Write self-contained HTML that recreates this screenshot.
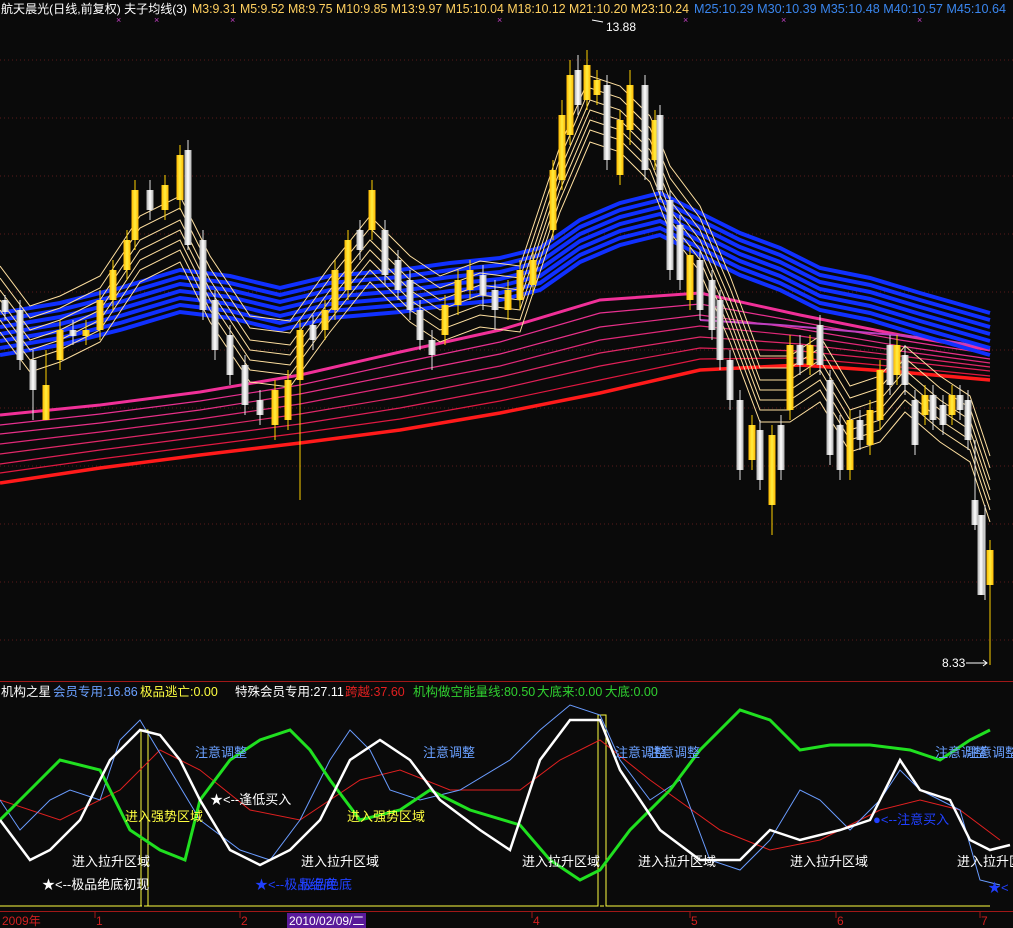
<!DOCTYPE html>
<html><head><meta charset="utf-8"><style>
html,body{margin:0;padding:0;background:#0a0a0a;width:1013px;height:928px;overflow:hidden}
svg{display:block}
text{font-family:"Liberation Sans","Noto Sans CJK SC",sans-serif}
</style></head><body>
<svg width="1013" height="928" viewBox="0 0 1013 928" xmlns="http://www.w3.org/2000/svg">
<rect width="1013" height="928" fill="#0a0a0a"/>
<!-- grid -->
<g stroke="#5a1a1a" stroke-dasharray="1,3" stroke-width="1">
<line x1="0" y1="60" x2="1013" y2="60"/><line x1="0" y1="118" x2="1013" y2="118"/><line x1="0" y1="176" x2="1013" y2="176"/><line x1="0" y1="234" x2="1013" y2="234"/><line x1="0" y1="292" x2="1013" y2="292"/><line x1="0" y1="350" x2="1013" y2="350"/><line x1="0" y1="408" x2="1013" y2="408"/><line x1="0" y1="466" x2="1013" y2="466"/><line x1="0" y1="524" x2="1013" y2="524"/><line x1="0" y1="582" x2="1013" y2="582"/><line x1="0" y1="640" x2="1013" y2="640"/>
</g>
<!-- header -->
<text x="1" y="13" font-size="12" fill="#fff" textLength="186" lengthAdjust="spacingAndGlyphs">航天晨光(日线,前复权) 夫子均线(3)</text>
<text x="192" y="13" font-size="12.5" fill="#ffd060" textLength="497" lengthAdjust="spacingAndGlyphs">M3:9.31  M5:9.52  M8:9.75  M10:9.85  M13:9.97  M15:10.04  M18:10.12  M21:10.20  M23:10.24</text>
<text x="694" y="13" font-size="12.5" fill="#3a86ee" textLength="312" lengthAdjust="spacingAndGlyphs">M25:10.29  M30:10.39  M35:10.48  M40:10.57  M45:10.64</text>
<g fill="#c040c0" font-size="9"><text x="116" y="23">×</text><text x="154" y="23">×</text><text x="230" y="23">×</text><text x="497" y="23">×</text><text x="683" y="23">×</text><text x="781" y="23">×</text><text x="917" y="23">×</text></g>

<!-- pink/red bundle -->
<g fill="none" stroke-width="1.2">
<path d="M0,415 L100,405 200,392 300,375 400,352 500,330 600,300 700,293 800,315 900,335 990,350" stroke="#f03098" stroke-width="3"/>
<path d="M0,425 L100,414 200,401 300,385 400,363 500,342 600,313 700,304 800,322 900,340 990,354" stroke="#e83090"/>
<path d="M0,434 L100,423 200,410 300,394 400,374 500,354 600,327 700,315 800,329 900,346 990,359" stroke="#e83088"/>
<path d="M0,444 L100,432 200,419 300,404 400,385 500,366 600,340 700,326 800,336 900,351 990,363" stroke="#e02878"/>
<path d="M0,454 L100,441 200,428 300,414 400,397 500,377 600,353 700,337 800,344 900,356 990,367" stroke="#e02868"/>
<path d="M0,464 L100,450 200,437 300,424 400,408 500,389 600,366 700,348 800,351 900,361 990,371" stroke="#e02058"/>
<path d="M0,473 L100,459 200,446 300,433 400,419 500,401 600,380 700,359 800,358 900,367 990,376" stroke="#e01840"/>
<path d="M0,483 L100,468 200,455 300,443 400,430 500,413 600,393 700,370 800,365 900,372 990,380" stroke="#ff1a1a" stroke-width="3.5"/>
<path d="M700,320 L780,325 860,332 930,338 990,348" stroke="#c040c0" stroke-width="2"/>
</g>
<!-- blue bundle -->
<g fill="none">
<path id="B" d="M0,355 L60,345 120,330 180,312 230,318 280,330 330,318 400,312 450,305 500,300 540,290 580,262 620,245 660,235 700,255 740,275 780,290 820,310 870,320 920,335 990,355" stroke="#1030ff" stroke-width="4"/>
<use href="#B" transform="translate(0,-7)" stroke="#1840f0" stroke-width="1"/>
<use href="#B" transform="translate(0,-14)" stroke="#2058f0" stroke-width="1"/>
<use href="#B" transform="translate(0,-21)" stroke="#2870f0" stroke-width="1"/>
<use href="#B" transform="translate(0,-28)" stroke="#3088f0" stroke-width="1"/>
<use href="#B" transform="translate(0,-35)" stroke="#38a0f0" stroke-width="1"/>
<use href="#B" transform="translate(0,-42)" stroke="#40b0ff" stroke-width="2.5"/>
</g>
<!-- yellow bundle -->
<g fill="none">
<path id="Y" d="M0,290 L30,330 60,320 100,300 140,240 180,220 210,280 250,340 290,345 330,290 370,240 410,280 440,300 480,285 520,290 560,170 590,100 620,110 650,140 670,190 700,230 730,300 760,380 790,380 820,360 850,410 880,400 905,370 940,400 970,420 990,480" stroke="#ffe0a0" stroke-width="1"/>
<use href="#Y" transform="translate(0,10)" stroke="#ffd080" stroke-width="1"/>
<use href="#Y" transform="translate(0,20)" stroke="#ffc860" stroke-width="1"/>
<use href="#Y" transform="translate(0,30)" stroke="#ffc020" stroke-width="2.5"/>
<use href="#Y" transform="translate(0,42)" stroke="#ffd080" stroke-width="1"/>
<use href="#Y" transform="translate(0,-12)" stroke="#ffe0b0" stroke-width="1"/>
<use href="#Y" transform="translate(0,-24)" stroke="#ffe8c0" stroke-width="1"/>
</g>
<!-- candles -->
<defs>
<linearGradient id="gy" x1="0" x2="1"><stop offset="0" stop-color="#ffb800"/><stop offset=".5" stop-color="#ffee40"/><stop offset="1" stop-color="#ffb800"/></linearGradient>
<linearGradient id="gw" x1="0" x2="1"><stop offset="0" stop-color="#b0b0b0"/><stop offset=".5" stop-color="#ffffff"/><stop offset="1" stop-color="#b0b0b0"/></linearGradient>
</defs>
<g stroke-width="1">
<g stroke="#ffd000">
<path d="M46,350V400 M60,320V370 M86,320V345 M100,290V340 M113,260V310 M127,230V280 M135,180V250 M165,175V220 M180,145V210 M275,380V440 M288,370V430 M300,320V500 M325,300V340 M335,260V320 M348,230V300 M372,180V240 M445,295V345 M458,270V315 M470,260V300 M508,280V320 M520,260V310 M533,250V295 M553,160V240 M562,100V190 M570,60V145 M587,50V110 M597,70V105 M620,110V185 M630,70V145 M655,110V170 M690,245V310 M752,415V470 M772,425V535 M790,335V420 M810,335V375 M850,410V480 M870,400V455 M880,360V430 M897,335V385 M925,385V425 M952,385V425 M990,540V665"/>
</g>
<g stroke="#e0e0e0">
<path d="M5,295V320 M20,300V370 M33,350V420 M73,320V345 M150,180V220 M188,140V250 M203,230V320 M215,290V360 M230,325V385 M245,355V415 M260,390V425 M313,315V350 M360,220V260 M385,220V285 M398,250V300 M410,270V320 M420,300V350 M432,330V370 M483,265V310 M495,280V330 M578,55V115 M607,75V170 M645,75V180 M660,105V200 M670,190V280 M680,215V290 M700,250V320 M712,270V340 M720,290V370 M730,350V410 M740,390V480 M760,420V490 M781,415V480 M800,335V375 M820,315V375 M830,370V465 M840,415V480 M860,410V450 M890,335V395 M905,345V395 M915,390V455 M933,385V430 M943,395V435 M960,385V420 M968,390V450 M975,440V530 M985,505V600"/>
</g>
</g>
<g fill="url(#gy)">
<rect x="42.5" y="385" width="7" height="35"/><rect x="56.5" y="330" width="7" height="30"/><rect x="82.5" y="330" width="7" height="6"/><rect x="96.5" y="300" width="7" height="30"/><rect x="109.5" y="270" width="7" height="30"/><rect x="123.5" y="240" width="7" height="30"/><rect x="131.5" y="190" width="7" height="50"/><rect x="161.5" y="185" width="7" height="25"/><rect x="176.5" y="155" width="7" height="45"/><rect x="271.5" y="390" width="7" height="35"/><rect x="284.5" y="380" width="7" height="40"/><rect x="296.5" y="330" width="7" height="50"/><rect x="321.5" y="310" width="7" height="20"/><rect x="331.5" y="270" width="7" height="40"/><rect x="344.5" y="240" width="7" height="50"/><rect x="368.5" y="190" width="7" height="40"/><rect x="441.5" y="305" width="7" height="30"/><rect x="454.5" y="280" width="7" height="25"/><rect x="466.5" y="270" width="7" height="20"/><rect x="504.5" y="290" width="7" height="20"/><rect x="516.5" y="270" width="7" height="30"/><rect x="529.5" y="260" width="7" height="25"/><rect x="549.5" y="170" width="7" height="60"/><rect x="558.5" y="115" width="7" height="65"/><rect x="566.5" y="75" width="7" height="60"/><rect x="583.5" y="65" width="7" height="35"/><rect x="593.5" y="80" width="7" height="15"/><rect x="616.5" y="120" width="7" height="55"/><rect x="626.5" y="85" width="7" height="45"/><rect x="651.5" y="120" width="7" height="40"/><rect x="686.5" y="255" width="7" height="45"/><rect x="748.5" y="425" width="7" height="35"/><rect x="768.5" y="435" width="7" height="70"/><rect x="786.5" y="345" width="7" height="65"/><rect x="806.5" y="345" width="7" height="20"/><rect x="846.5" y="420" width="7" height="50"/><rect x="866.5" y="410" width="7" height="35"/><rect x="876.5" y="370" width="7" height="50"/><rect x="893.5" y="345" width="7" height="30"/><rect x="921.5" y="395" width="7" height="20"/><rect x="948.5" y="395" width="7" height="20"/><rect x="986.5" y="550" width="7" height="35"/>
</g>
<g fill="url(#gw)">
<rect x="1.5" y="300" width="7" height="12"/><rect x="16.5" y="310" width="7" height="50"/><rect x="29.5" y="360" width="7" height="30"/><rect x="69.5" y="330" width="7" height="6"/><rect x="146.5" y="190" width="7" height="20"/><rect x="184.5" y="150" width="7" height="95"/><rect x="199.5" y="240" width="7" height="70"/><rect x="211.5" y="300" width="7" height="50"/><rect x="226.5" y="335" width="7" height="40"/><rect x="241.5" y="365" width="7" height="40"/><rect x="256.5" y="400" width="7" height="15"/><rect x="309.5" y="325" width="7" height="15"/><rect x="356.5" y="230" width="7" height="20"/><rect x="381.5" y="230" width="7" height="45"/><rect x="394.5" y="260" width="7" height="30"/><rect x="406.5" y="280" width="7" height="30"/><rect x="416.5" y="310" width="7" height="30"/><rect x="428.5" y="340" width="7" height="15"/><rect x="479.5" y="275" width="7" height="20"/><rect x="491.5" y="290" width="7" height="20"/><rect x="574.5" y="70" width="7" height="35"/><rect x="603.5" y="85" width="7" height="75"/><rect x="641.5" y="85" width="7" height="85"/><rect x="656.5" y="115" width="7" height="75"/><rect x="666.5" y="200" width="7" height="70"/><rect x="676.5" y="225" width="7" height="55"/><rect x="696.5" y="260" width="7" height="50"/><rect x="708.5" y="280" width="7" height="50"/><rect x="716.5" y="300" width="7" height="60"/><rect x="726.5" y="360" width="7" height="40"/><rect x="736.5" y="400" width="7" height="70"/><rect x="756.5" y="430" width="7" height="50"/><rect x="777.5" y="425" width="7" height="45"/><rect x="796.5" y="345" width="7" height="20"/><rect x="816.5" y="325" width="7" height="40"/><rect x="826.5" y="380" width="7" height="75"/><rect x="836.5" y="425" width="7" height="45"/><rect x="856.5" y="420" width="7" height="20"/><rect x="886.5" y="345" width="7" height="40"/><rect x="901.5" y="355" width="7" height="30"/><rect x="911.5" y="400" width="7" height="45"/><rect x="929.5" y="395" width="7" height="25"/><rect x="939.5" y="405" width="7" height="20"/><rect x="956.5" y="395" width="7" height="15"/><rect x="964.5" y="400" width="7" height="40"/><rect x="971.5" y="500" width="7" height="25"/><rect x="977.5" y="515" width="7" height="80"/>
</g>
<!-- high/low labels -->
<path d="M592,20 L603,22" stroke="#fff" fill="none"/>
<text x="606" y="31" font-size="12" fill="#fff">13.88</text>
<text x="942" y="667" font-size="12" fill="#fff">8.33</text>
<path d="M966,663 H987 M983,660 L987,663 983,666" stroke="#fff" fill="none"/>

<!-- separator -->
<line x1="0" y1="681.5" x2="1013" y2="681.5" stroke="#a01818"/>
<text x="1" y="696" font-size="12.5" fill="#fff">机构之星</text>
<text x="53" y="696" font-size="12.5" fill="#6aa0ff">会员专用:16.86</text>
<text x="140" y="696" font-size="12.5" fill="#ffff40">极品逃亡:0.00</text>
<text x="235" y="696" font-size="12.5" fill="#fff">特殊会员专用:27.11</text>
<text x="345" y="696" font-size="12.5" fill="#e02020">跨越:37.60</text>
<text x="413" y="696" font-size="12.5" fill="#30d030">机构做空能量线:80.50</text>
<text x="537" y="696" font-size="12.5" fill="#30d030">大底来:0.00</text>
<text x="605" y="696" font-size="12.5" fill="#30d030">大底:0.00</text>

<!-- indicator -->
<g fill="none">
<path d="M0,906 H141 V730 H148 V906 H598 V715 H606 V906 H990" stroke="#ffff40" stroke-width="1"/>
<path d="M0,906 H990" stroke="#ffff40" stroke-dasharray="4,2"/>
<path d="M0,800 L60,820 120,790 160,750 200,770 250,810 300,820 360,780 400,770 450,790 520,790 560,760 600,740 650,780 720,830 770,850 820,840 880,810 920,800 960,810 1000,840" stroke="#e02020" stroke-width="1"/>
<path d="M0,800 L20,830 50,800 70,790 100,800 120,740 140,720 170,770 200,820 240,850 270,860 300,820 330,760 350,730 370,750 390,790 420,800 460,790 510,760 540,730 570,705 600,715 620,760 650,800 680,780 710,860 740,870 770,840 800,790 820,800 850,830 880,800 900,770 920,790 940,800 960,810 980,880 1000,885" stroke="#6a9cff" stroke-width="1"/>
<path d="M0,820 L30,790 60,760 100,770 130,830 160,850 185,860 200,800 230,760 260,740 290,730 310,750 330,780 360,820 400,810 430,790 470,810 520,825 550,860 580,880 600,870 630,830 670,790 700,750 740,710 770,720 800,750 830,745 870,745 910,750 940,760 970,740 990,730" stroke="#20e020" stroke-width="3"/>
<path d="M0,820 L30,860 50,850 80,820 110,760 140,730 160,735 180,760 200,800 230,850 260,865 290,850 320,820 350,760 380,740 410,760 440,800 480,830 510,850 540,760 570,720 600,720 620,770 660,830 700,860 740,860 770,830 800,840 840,830 870,820 900,760 920,790 950,800 970,840 990,850 1010,845" stroke="#ffffff" stroke-width="2.5"/>
</g>
<g font-size="13">
<text x="195" y="757" fill="#6aa0ff">注意调整</text>
<text x="423" y="757" fill="#6aa0ff">注意调整</text>
<text x="615" y="757" fill="#6aa0ff">注意调整</text>
<text x="648" y="757" fill="#6aa0ff">注意调整</text>
<text x="935" y="757" fill="#6aa0ff">注意调整</text>
<text x="966" y="757" fill="#6aa0ff">注意调整</text>
<text x="125" y="821" fill="#ffff40">进入强势区域</text>
<text x="347" y="821" fill="#ffff40">进入强势区域</text>
<text x="210" y="804" fill="#fff">★&lt;--逢低买入</text>
<text x="72" y="866" fill="#fff">进入拉升区域</text>
<text x="301" y="866" fill="#fff">进入拉升区域</text>
<text x="522" y="866" fill="#fff">进入拉升区域</text>
<text x="638" y="866" fill="#fff">进入拉升区域</text>
<text x="790" y="866" fill="#fff">进入拉升区域</text>
<text x="957" y="866" fill="#fff">进入拉升区域</text>
<text x="42" y="889" fill="#fff">★&lt;--极品绝底初现</text>
<text x="255" y="889" fill="#2040ff">★&lt;--极品绝底</text>
<text x="300" y="889" fill="#2040ff">极品绝底</text>
<text x="873" y="824" fill="#2040ff">●&lt;--注意买入</text>
<text x="988" y="892" fill="#2040ff">★&lt;</text>
</g>

<!-- axis -->
<line x1="0" y1="911.5" x2="1013" y2="911.5" stroke="#a01818"/>
<g stroke="#a01818"><path d="M95,912V918 M240,912V918 M532,912V918 M690,912V918 M836,912V918 M980,912V918"/></g>
<g font-size="12" fill="#d02020">
<text x="2" y="925">2009年</text><text x="96" y="925">1</text><text x="241" y="925">2</text><text x="533" y="925">4</text><text x="691" y="925">5</text><text x="837" y="925">6</text><text x="981" y="925">7</text>
</g>
<rect x="287" y="913" width="79" height="15" fill="#5a1a9a"/>
<text x="289" y="925" font-size="12" fill="#fff">2010/02/09/二</text>
</svg>
</body></html>
